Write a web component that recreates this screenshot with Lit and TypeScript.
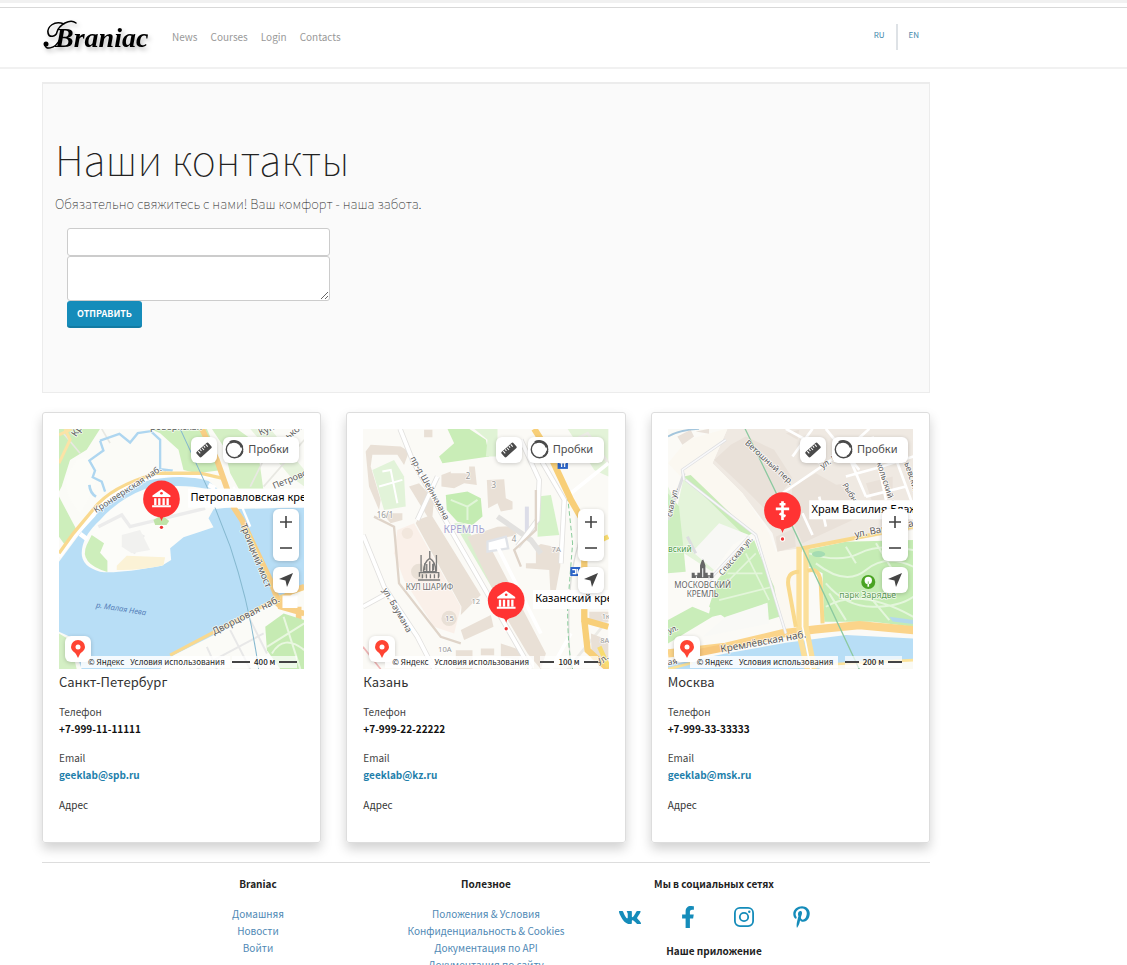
import { LitElement, html, svg, css } from "lit";
import { customElement, property } from "lit/decorators.js";

interface Office {
  id: string;
  city: string;
  phone: string;
  email: string;
  scale: string;
}

const offices: Office[] = [
  { id: "spb", city: "Санкт-Петербург", phone: "+7-999-11-11111", email: "geeklab@spb.ru", scale: "400 м" },
  { id: "kz", city: "Казань", phone: "+7-999-22-22222", email: "geeklab@kz.ru", scale: "100 м" },
  { id: "msk", city: "Москва", phone: "+7-999-33-33333", email: "geeklab@msk.ru", scale: "200 м" },
];

// Street or place name drawn on a map, turned around its start point.
const label = (x: number, y: number, angle: number, size: number, text: string, color = "#5b5b5b") => svg`
  <text x=${x} y=${y} font-size=${size} fill=${color} transform="rotate(${angle} ${x} ${y})"
    stroke="#fff" stroke-width="5" stroke-opacity=".75" paint-order="stroke" stroke-linejoin="round">${text}</text>`;

const museum = svg`<g fill="#fff"><path d="M-27 -10L0 -29 27 -10v4h-54z"/><path d="M-22 -2h7v20h-7zM-10 -2h7v20h-7zM3 -2h7v20h-7zM15 -2h7v20h-7zM-28 19h56v6h-56z"/></g><circle cy="-17" r="4" fill="#f33"/>`;
const cross = svg`<path d="M0 -28V28M-9 -19H9M-20 -5H20M-9 9L9 17" stroke="#fff" stroke-width="8" fill="none"/>`;

const marker = (x: number, y: number, sign: unknown, text: string) => svg`
  <rect x=${x + 80} y=${y - 31} width="500" height="57" fill="#fff"/>
  <text x=${x + 87} y=${y + 6} font-size="33" fill="#000">${text}</text>
  <g transform="translate(${x} ${y})">
    <path d="M-14 50Q-3 54 0 67Q3 54 14 50z" fill="#f33"/>
    <circle r="55" fill="#f33"/>${sign}
    <circle cy="85" r="8" fill="#fff"/><circle cy="85" r="5" fill="#e33"/>
  </g>`;

const spbMap = svg`
  <rect x="27" y="27" width="735" height="720" fill="#fbfbf7"/>
  <path d="M27 27H150L110 90 60 120 35 200 27 215zM27 230L80 330 45 375 27 350z" fill="#cdeebb"/>
  <path d="M300 27H470L490 75 515 150 440 160 400 150 385 90 330 40z" fill="#cdeebb"/>
  <path d="M485 27H560L620 70 640 215 570 215 540 160 520 80z" fill="#d4efc4"/>
  <path d="M600 27H660L762 150V200L720 170z" fill="#e6f3dc"/>
  <path d="M80 120Q130 100 140 150Q140 210 90 280Q40 230 50 170z" fill="#fcfcf8"/>
  <path d="M155 27L180 70M345 150V165M40 40L90 100M640 200L762 60M600 200L640 120" stroke="#e8e8e2" stroke-width="5" fill="none"/>
  <path d="M150 62L160 92 118 122 135 152 128 172 155 185 165 215M150 62L208 42 240 68 263 40 302 34 330 60 330 148 364 152 360 165" stroke="#aed6f0" stroke-width="7" fill="none"/>
  <path d="M118 195Q120 220 138 230" stroke="#aed6f0" stroke-width="8" fill="none"/>
  <path d="M27 425L120 300Q185 220 290 182Q400 160 475 183L500 205 545 268 762 262V500L680 530 560 610 370 705 330 747H95L60 650 27 635z" fill="#b8def6"/>
  <path d="M95 400Q95 350 150 300Q205 237 290 205Q400 190 470 208L542 262 490 268 475 295 490 322 450 335 400 352 360 385 363 420 335 437Q200 462 150 455Q95 440 95 400z" fill="#fcfcf9"/>
  <path d="M125 345L162 370 150 398 172 422V456Q85 430 110 375z" fill="#cdeebb"/>
  <path d="M200 437L230 407 345 412 340 436Q270 452 200 450z" fill="#fbf2d6"/>
  <path d="M145 320L215 285 240 320 465 265M280 345L250 400" stroke="#ececec" stroke-width="10" fill="none"/>
  <path d="M215 345L270 330 300 390 245 400 215 380z" fill="#f1f1ef"/>
  <path d="M310 300l25-15 22 18-8 12h-34z" fill="#bfe3a8"/>
  <path d="M90 342L112 358M475 195L495 205M27 410L70 350 130 285Q170 215 300 172L360 162 490 170" stroke="#fff" stroke-width="14" fill="none"/>
  <path d="M27 400L70 340 130 268Q180 200 320 160L450 160 515 175M360 705L560 600 690 530 762 505" stroke="#f9d98f" stroke-width="10" fill="none"/>
  <path d="M27 45L65 27M45 27L60 60 27 130" stroke="#fbe3a6" stroke-width="9" fill="none"/>
  <path d="M455 27L500 120 550 262 575 300 660 480 690 560 762 580M680 560L720 515 762 500M745 560V620" stroke="#f8cf86" stroke-width="17" fill="none"/>
  <path d="M550 200L600 320M700 530h38v30h-38z" stroke="#fff" stroke-width="7" fill="#fff"/>
  <path d="M645 620L700 580 762 600V747H690L650 690z" fill="#c6ebb3"/>
  <path d="M650 680L762 610M700 590L750 747M665 700Q700 640 762 690" stroke="#e9f7e0" stroke-width="6" fill="none"/>
  <path d="M470 680L500 747M540 630L600 747M600 600L650 700M440 747L640 640" stroke="#e8e8e8" stroke-width="6" fill="none"/>
  <path d="M390 27L470 200 540 380Q600 560 625 747" stroke="#85b8cf" stroke-width="3" fill="none"/>
  <path d="M27 640L60 660 80 747H27z" fill="#d4efc4"/>
  ${label(78, 52, -55, 28, "Кр")}${label(300, 32, 0, 28, "роверкская")}
  ${label(138, 280, -33, 26, "Кронверкская наб.")}
  ${label(630, 48, -25, 28, "Кун")}${label(715, 60, -40, 28, "ьков")}${label(672, 208, -23, 27, "Петровская")}
  ${label(570, 315, 68, 28, "Троицкий мост")}${label(492, 645, -27, 29, "Дворцовая наб.")}
  <text x="137" y="562" font-size="23" font-style="italic" fill="#5580b8" transform="rotate(9 137 562)">р. Малая Нева</text>
  ${marker(334, 237, museum, "Петропавловская крепость")}`;

const kzMap = svg`
  <rect x="27" y="27" width="735" height="720" fill="#fbfaf6"/>
  <path d="M280 27H345L395 60 405 110 265 130 255 110 300 70z" fill="#c9edb7"/>
  <path d="M360 27H430V110H395L400 60z" fill="#e0f3d5"/>
  <path d="M640 27H762V170L720 150z" fill="#e3f3d8"/>
  <path d="M275 225L340 215 380 235 385 290 355 315 310 305 278 270z" fill="#c4ecb2"/>
  <path d="M550 230L590 225 615 345 550 350z" fill="#d5f2c8"/>
  <path d="M55 150L120 120 150 170 155 260 90 270z" fill="#e2f3d9"/>
  <path d="M300 310L330 310 480 560 470 600z" fill="#d9f0ce"/>
  <path d="M660 60L700 40 762 130M640 747L760 600" stroke="#ecebe6" stroke-width="8" fill="none"/>
  <path d="M130 330L180 310 320 560 300 640 240 620 150 480 120 400z" fill="#faf0e9"/>
  <g fill="#e9e0d6">
    <path d="M35 95L50 75 140 80 165 95 150 135 130 105 55 105 50 140 80 240 75 270 45 200z"/>
    <path d="M165 200L195 190 240 240 235 290 380 525 320 585 322 560 185 310 190 300 220 290z"/>
    <path d="M262 165L290 155V160H345V140H362L368 195 330 190 300 205 262 200z"/>
    <path d="M398 180L450 178 455 235 475 245V268L440 275 430 250 402 265z"/>
    <path d="M340 350L430 320 480 318 487 345 400 365 575 700 560 747 520 700 455 590z"/>
    <path d="M545 380L560 372 620 385 618 440 605 510 588 510 585 450 515 445V430L545 430z"/>
    <path d="M320 630L410 585 418 620 330 660z"/>
    <path d="M305 690H355V747H305zM380 685H420V705H380zM440 670L500 690 495 720 440 710zM705 575h57v30h-57zM710 640l52 20v87l-50-30z"/>
    <circle cx="285" cy="595" r="23"/><circle cx="195" cy="455" r="24"/><circle cx="160" cy="340" r="17" fill="#f2e7dd"/>
    <path d="M85 280H145V300L110 310zM210 30h25v22h-25z"/>
  </g>
  <path d="M85 155L110 150 130 250M75 200L145 180" stroke="#fff" stroke-width="6" fill="none"/>
  <path d="M290 240L340 260 370 240M340 260V300" stroke="#e1f5d8" stroke-width="6" fill="none"/>
  <path d="M400 365L455 350 462 385 400 395z" fill="#fff" stroke="#e0e3e8" stroke-width="7"/>
  <path d="M512 260h12v85h-12z" fill="#dcdde8"/>
  <g fill="none" stroke="#e2e1df" stroke-width="16">
    <path d="M138 27L175 120 290 330 530 747"/>
    <path d="M27 345L90 500 190 650 240 747M27 560L100 520M190 300L250 170"/>
    <path d="M500 60L555 180 550 300 490 380M430 290L530 360 560 400M620 430L630 240 560 120"/>
  </g>
  <g fill="none" stroke="#fff" stroke-width="11">
    <path d="M138 27L175 120 290 330 530 747"/>
    <path d="M27 345L90 500 190 650 240 747M27 560L100 520M190 300L250 170"/>
    <path d="M500 60L555 180 550 300 490 380M620 430L630 240 560 120"/>
    <path d="M650 220L762 130M430 380L560 640M590 747L650 640"/>
  </g>
  <path d="M60 290L120 320 135 490 260 650 320 670M545 210V330L480 390 500 440" stroke="#dfd4c9" stroke-width="7" fill="none"/>
  <path d="M650 747Q630 520 670 380L690 290" stroke="#dededb" stroke-width="4" fill="none"/>
  <path d="M575 90L640 230 655 370 640 560Q640 690 655 747" stroke="#8acb9b" stroke-width="3" stroke-dasharray="14 8" fill="none"/>
  <path d="M540 27L580 90 650 240 690 310 690 500 690 600 762 620M690 600L700 690 762 747" stroke="#f8cf78" stroke-width="19" fill="none"/>
  <path d="M720 370L762 350M735 680L762 740" stroke="#f8dc70" stroke-width="14" fill="none"/>
  <path d="M27 680L80 747" stroke="#efb6b6" stroke-width="5"/>
  <g fill="#2b64c8"><rect x="610" y="122" width="31" height="25"/><rect x="648" y="441" width="30" height="27"/></g>
  <path d="M616 129h19M622 129v12M631 129v12M654 449h10v12h-9M669 447v14" stroke="#fff" stroke-width="4" fill="none"/>
  <g fill="none" stroke="#7a7a7a" stroke-width="4">
    <path d="M192 480h66M196 470v-12h58v12M201 455V405M212 450V430M247 455V405M238 450V430"/>
    <path d="M208 455Q210 425 227 415Q245 425 245 455zM227 415V393M205 475v-12M217 475v-12M229 475v-12M241 475v-12M253 475v-12M218 455V432M227 455V424M236 455V432"/>
  </g>
  ${label(168, 115, 61, 26, "пр-д Шейнкмана")}${label(85, 510, 60, 26, "ул. Баумана")}
  ${label(268, 340, 0, 31, "КРЕМЛЬ", "#a5a4d0")}${label(155, 509, 0, 24, "КУЛ ШАРИФ", "#707070")}
  ${label(68, 293, 0, 24, "16/1", "#999")}${label(335, 178, 0, 24, "2", "#999")}${label(412, 205, 0, 24, "3", "#999")}
  ${label(473, 367, 0, 24, "4", "#999")}${label(592, 397, 0, 23, "7А", "#999")}${label(352, 553, 0, 23, "12", "#999")}
  ${label(273, 602, 0, 23, "15", "#999")}${label(252, 696, 0, 23, "10А", "#999")}${label(738, 670, 0, 22, "8А", "#999")}${label(742, 597, 0, 22, "1к", "#999")}
  ${label(735, 738, -40, 27, "Ул.")}
  ${marker(456, 541, museum, "Казанский кремль")}`;

const mskMap = svg`
  <rect x="27" y="27" width="735" height="720" fill="#fbfaf6"/>
  <path d="M205 27H762V330L440 385 355 395 340 340 250 220 160 130z" fill="#efe9e2"/>
  <path d="M27 130L85 60 200 27H205L160 130 250 220 330 340 350 395 425 385 420 640 380 640 290 340 75 180z" fill="#fbf8f1"/>
  <g fill="#e9e1d9">
    <path d="M215 75L260 50 345 90 400 175 370 215 340 290 250 200 165 120z"/>
    <path d="M400 200L470 160 540 200 580 300 430 370 390 280z"/>
    <path d="M350 350L405 325 410 380 355 395zM500 200L560 190 600 260 540 280z"/>
    <path d="M380 40L420 30 415 60zM620 190L700 170 700 230 640 250zM55 50l40-20 10 20-35 25zM110 35l40-8v15z"/>
  </g>
  <g stroke="#fff" stroke-width="8" fill="none">
    <path d="M370 220L560 90 630 27M560 90L620 230M480 130L440 60 380 27M400 110L460 27M500 27L600 150M640 50L680 240M560 170L650 145 762 110M700 90L762 260M430 280L460 345M480 230L500 320M620 230L740 200"/>
  </g>
  <path d="M27 200L55 260 75 170 270 335 220 370 160 455 75 400 27 330z" fill="#e4f4da"/>
  <path d="M75 170L95 165 250 315 280 340 260 350z" fill="#c9ecb8"/>
  <path d="M100 395L180 310 270 345 220 375 165 450z" fill="#f8f8f5"/>
  <path d="M27 220L60 260 75 400 80 455 27 460z" fill="#cdeebf"/>
  <path d="M285 360L300 400 345 500 360 590 245 625 150 560 175 480 240 400z" fill="#c9edb9"/>
  <path d="M165 510L325 550 160 590 27 670V600L100 560 150 580z" fill="#c9edb9"/>
  <path d="M190 500L290 400M180 540L340 500M260 400L330 540M205 460L310 460" stroke="#e3f5da" stroke-width="5" fill="none"/>
  <path d="M200 590L325 548 330 610 130 650z" fill="#f9f9f6"/>
  <path d="M440 390L560 365 762 360V620L640 605 495 605 490 460 450 440z" fill="#c5ecb4"/>
  <g stroke="#e4f6dc" stroke-width="6" fill="none">
    <path d="M450 400Q540 430 600 400T762 390M470 430Q560 500 620 450T762 440M500 560Q600 500 762 590M500 490Q560 560 640 560T762 530M560 380L590 430M650 370L700 450M510 520L560 600M640 540L690 600"/>
  </g>
  <ellipse cx="478" cy="402" rx="20" ry="9" fill="#a5dcb2"/>
  <path d="M690 590L730 595 762 600V612L700 604z" fill="#b3d9ec"/>
  <path d="M27 735L200 700 380 668 560 645 762 655V720L600 747H27z" fill="#b8def6"/>
  <path d="M500 720L762 700V747H480z" fill="#fafaf4"/>
  <path d="M510 712Q640 690 762 698V720Q640 715 510 735z" fill="#b8def6"/>
  <path d="M27 700L200 680 370 640 470 628 600 615 762 630" stroke="#fbd48a" stroke-width="25" fill="none"/>
  <path d="M55 710L200 682" stroke="#f7c77c" stroke-width="22" fill="none"/>
  <path d="M420 380V640L445 747M440 385V620L465 747" stroke="#fbdf9a" stroke-width="17" fill="none"/>
  <path d="M430 395V620L455 747" stroke="#fff" stroke-width="5" fill="none"/>
  <path d="M420 455Q380 455 388 500L410 620M445 452Q485 440 485 500L490 610M430 385L762 320" stroke="#f9d98c" stroke-width="12" fill="none"/>
  <path d="M500 733L762 720M27 747L100 728" stroke="#fce39a" stroke-width="8"/>
  <path d="M75 180L70 150 200 60M75 160L27 300M80 180L290 345 380 640M150 480L270 350M110 400L85 350" stroke="#dddee0" stroke-width="9" fill="none"/>
  <path d="M75 180L70 150 200 60M80 180L290 345 380 640M150 480L270 350" stroke="#f8f8fa" stroke-width="5" fill="none"/>
  <path d="M27 50Q60 30 120 27" stroke="#a3c5dc" stroke-width="5" fill="none"/>
  <path d="M258 27L400 320 600 747" stroke="#8cc9a0" stroke-width="4" fill="none"/>
  <circle cx="627" cy="486" r="21" fill="#4aa322"/><circle cx="627" cy="481" r="11" fill="#fff"/><path d="M627 482v18" stroke="#fff" stroke-width="5"/><path d="M627 484v8" stroke="#4aa322" stroke-width="2"/>
  <path d="M98 474V458h9v8h8v-8h8v-22l8-22 8 22v22h7v8h8v-8h9v16z" fill="#666"/><path d="M131 412V420M131 445V472M112 474v-5M150 474v-5" stroke="#fff" stroke-width="3"/>
  ${label(256, 72, 42, 25, "Ветошный пер.")}${label(490, 147, -33, 25, "ул. Ильинка")}${label(548, 195, 58, 24, "Рыбный")}
  ${label(652, 130, 72, 25, "кольский пер.")}${label(735, 130, 72, 25, "ьевский")}${label(38, 292, -78, 24, "ская ул.")}
  ${label(190, 468, -50, 24, "Спасская ул.")}${label(588, 353, -11, 29, "ул. Варварка")}
  ${label(27, 396, 0, 25, "вский", "#4f9d4a")}${label(46, 504, 0, 24, "МОСКОВСКИЙ", "#666")}${label(83, 532, 0, 24, "КРЕМЛЬ", "#666")}
  ${label(540, 534, 0, 26, "парк Зарядье", "#5f9c55")}${label(186, 697, -10, 30, "Кремлёвская наб.")}
  ${label(30, 640, -20, 24, "ул.")}${label(27, 735, -8, 26, "ая")}
  ${marker(370, 272, cross, "Храм Василия Блаженного")}`;

const maps: Record<string, unknown> = { spb: spbMap, kz: kzMap, msk: mskMap };

@customElement("office-map")
export class OfficeMap extends LitElement {
  @property() name = "spb";
  @property() scale = "";

  static styles = css`
    :host { display: block; position: relative; overflow: hidden; height: 240px; font-family: "Noto Sans", sans-serif; }
    .canvas { display: block; width: 100%; height: 100%; }
    .control { position: absolute; display: flex; align-items: center; justify-content: center; padding: 0; border: 0; border-radius: 6px; background: #fff; color: #4d4d4d; box-shadow: 0 1px 4px rgba(0, 0, 0, .2); font: 11px/16px "Noto Sans", sans-serif; height: 26px; width: 26px; }
    .ruler { top: 8px; right: 87px; }
    .traffic { top: 8px; right: 5px; width: 76px; gap: 4px; justify-content: flex-start; padding: 0 0 2px 2px; }
    .zoom { position: absolute; top: 80px; right: 5px; width: 26px; border-radius: 6px; background: #fff; box-shadow: 0 1px 4px rgba(0, 0, 0, .2); }
    .step { display: flex; align-items: center; justify-content: center; width: 26px; height: 26px; padding: 0; border: 0; background: none; }
    .locate { top: 138px; right: 5px; }
    .brand { left: 6px; bottom: 7px; }
    .legal { position: absolute; left: 22px; right: 0; bottom: 1px; display: flex; align-items: center; justify-content: space-between; color: #222; font: 8px/12px "Noto Sans CJK SC", "Noto Sans", sans-serif; }
    .terms { display: flex; gap: 6px; padding: 0 5px 0 7px; background: rgba(255, 255, 255, .85); }
    .terms a { color: inherit; text-decoration: none; }
    .scale { display: flex; align-items: center; gap: 4px; margin-right: 7px; background: rgba(255, 255, 255, .7); font-weight: 500; }
    .rule { width: 18px; height: 2px; background: #444; }
    .short .rule { width: 14px; }
    .short { margin-right: 11px; }
  `;

  render() {
    return html`
      <svg class="canvas" viewBox="27 27 735 720" preserveAspectRatio="xMidYMid slice" role="img" aria-label="Карта">${maps[this.name]}</svg>
      <a class="control brand" href="#map" aria-label="Яндекс Карты">
        <svg width="14" height="18" viewBox="0 0 14 18"><path d="M7 0a7 7 0 0 1 7 7c0 4-4.400 5-5.500 8L7 18l-1.500-3C4.400 12 0 11 0 7a7 7 0 0 1 7-7z" fill="#f43"/><circle cx="7" cy="7" r="2.500" fill="#fff"/></svg>
      </a>
      <div class="legal">
        <span class="terms"><a href="#yandex">© Яндекс</a><a href="#terms">Условия использования</a></span>
        <span class="scale ${this.name === "spb" ? "" : "short"}"><span class="rule"></span>${this.scale}<span class="rule"></span></span>
      </div>
      <button class="control ruler" aria-label="Измерить">
        <svg width="16" height="16" viewBox="0 0 16 16"><g transform="rotate(-42 8 8)"><rect x="0" y="4.500" width="16" height="7" rx="1.500" fill="#4a4a4a"/><path d="M3 5v3M5.500 5v2M8 5v3M10.500 5v2M13 5v3" stroke="#fff"/></g></svg>
      </button>
      <button class="control traffic">
        <svg width="19" height="19" viewBox="0 0 19 19" fill="none" stroke="#4a4a4a"><circle cx="9.500" cy="9.500" r="8.200" stroke-width="1.400"/><path d="M5 2.500A8.200 8.200 0 0 1 17 7.500" stroke-width="2.600"/><path d="M17.500 11A8 8 0 0 1 13 16.600" stroke-width="2"/></svg>
        Пробки
      </button>
      <div class="zoom">
        <button class="step" aria-label="Приблизить"><svg width="12" height="12" viewBox="0 0 12 12"><path d="M6 0v12M0 6h12" stroke="#444" stroke-width="1.600"/></svg></button>
        <button class="step" aria-label="Отдалить"><svg width="12" height="12" viewBox="0 0 12 12"><path d="M0 6h12" stroke="#444" stroke-width="1.600"/></svg></button>
      </div>
      <button class="control locate" aria-label="Моё местоположение">
        <svg width="14" height="14" viewBox="0 0 14 14"><path d="M14 0L8 14 6.500 7.500 0 6z" fill="#444"/></svg>
      </button>`;
  }
}

@customElement("app-root")
export class AppRoot extends LitElement {
  static styles = css`
    :host { display: block; background: #fff; color: #222; font: 400 10px/17px "Noto Sans CJK SC", "Noto Sans", sans-serif; }
    * { box-sizing: border-box; }
    a { text-decoration: none; }
    .strip { height: 8px; border-top: 3px solid #f1f1f1; border-bottom: 1px solid #d8d8d8; }
    .navbar { display: flex; align-items: center; height: 61px; border-bottom: 2px solid #f1f1f1; padding: 0 42px 2px; }
    .bar { display: flex; align-items: center; width: 100%; max-width: 888px; }
    .logo { display: flex; align-items: center; width: 106px; height: 36px; margin-right: 24px; }
    .logo svg { overflow: visible; filter: drop-shadow(2px 3px 2px rgba(0, 0, 0, .25)); }
    .menu { display: flex; flex: 1; gap: 13px; }
    .menu a { color: #999; }
    .langs { display: flex; align-items: center; font-size: 8px; }
    .langs a { padding: 0 11px 4px; color: #3f87ab; line-height: 22px; }
    .langs a + a { border-left: 2px solid #dee2e6; }
    main, footer { max-width: 972px; padding: 0 42px; }
    .hero { margin-top: 13px; padding: 50px 12px 64px; border: 1px solid #ececec; border-top: 2px solid #ececec; background: #fafafa; }
    h1 { margin: 0; font-size: 41px; line-height: 48px; font-weight: 100; }
    .lead { margin: 12px 0 14px; font-size: 13px; line-height: 20px; font-weight: 100; color: #222; }
    form { display: flex; flex-direction: column; align-items: flex-start; padding: 0 12px; }
    .field { display: block; width: 263px; max-width: 100%; height: 28px; margin: 0; padding: 4px 8px; border: 1px solid #ccc; border-radius: 3px; background: #fff; font: inherit; outline: 0; }
    .message { height: 45px; resize: both; }
    .send { height: 27px; padding: 0 10px; border: 0; border-bottom: 2px solid #127ba3; border-radius: 3px; background: #158cba; color: #fff; font: 700 9px/22px "Noto Sans CJK SC", "Noto Sans", sans-serif; text-transform: uppercase; }
    .cards { display: grid; grid-template-columns: repeat(3, 1fr); gap: 25px; margin-top: 19px; }
    .card { padding: 16px; border: 1px solid #ddd; border-radius: 3px; box-shadow: 0 6px 12px rgba(0, 0, 0, .18); }
    .card h2 { margin: 3px 0 11px; font-size: 13px; line-height: 20px; font-weight: 400; color: #333; }
    dl { margin: 0 0 12px; color: #444; }
    dd { margin: 0; font-weight: 700; color: #111; }
    dd a { color: #1f7fab; }
    .address { margin: 13px 0; color: #333; }
    footer { margin-top: 19px; }
    .links { display: grid; grid-template-columns: repeat(3, 1fr); padding: 12px 102px 0; border-top: 1px solid #ddd; text-align: center; }
    h3 { margin: 0 0 13px; font-size: 10px; line-height: 17px; font-weight: 700; }
    .links ul { margin: 0; padding: 0; list-style: none; }
    .links li a { color: #5089b5; }
    .social { display: flex; justify-content: center; align-items: center; gap: 39px; height: 24px; margin: 0 0 13px; }
    .social a { display: flex; color: #158cba; }
  `;

  private renderCard(o: Office) {
    return html`
      <article class="card">
        <office-map name=${o.id} scale=${o.scale}></office-map>
        <h2>${o.city}</h2>
        <dl><dt>Телефон</dt><dd>${o.phone}</dd></dl>
        <dl><dt>Email</dt><dd><a href="mailto:${o.email}">${o.email}</a></dd></dl>
        <p class="address">Адрес</p>
      </article>`;
  }

  render() {
    return html`
      <div class="strip"></div>
      <header class="navbar">
        <div class="bar">
          <a class="logo" href="#home" aria-label="Braniac">
            <svg width="106" height="36" viewBox="0 0 106 36">
              <path d="M22 5C12 1 5 8 6 14c1 5 8 4 9-1C17 6 28-1 34 4M18 20c-5 11-16 11-15 5" fill="none" stroke="#000" stroke-width="1.500" stroke-linecap="round"/>
              <circle cx="4" cy="25" r="2.500"/>
              <text x="13" y="28" font-family="Liberation Serif, serif" font-size="28" font-weight="700" font-style="italic">Braniac</text>
            </svg>
          </a>
          <nav class="menu"><a href="#news">News</a><a href="#courses">Courses</a><a href="#login">Login</a><a href="#contacts">Contacts</a></nav>
          <div class="langs"><a href="#ru">RU</a><a href="#en">EN</a></div>
        </div>
      </header>
      <main>
        <section class="hero">
          <h1>Наши контакты</h1>
          <p class="lead">Обязательно свяжитесь с нами! Ваш комфорт - наша забота.</p>
          <form @submit=${(e: Event) => e.preventDefault()}>
            <input class="field" type="text" aria-label="Контакт">
            <textarea class="field message" aria-label="Сообщение"></textarea>
            <button class="send" type="submit">Отправить</button>
          </form>
        </section>
        <section class="cards">${offices.map((o) => this.renderCard(o))}</section>
      </main>
      <footer>
        <div class="links">
          <section>
            <h3>Braniac</h3>
            <ul><li><a href="#home">Домашняя</a></li><li><a href="#news">Новости</a></li><li><a href="#login">Войти</a></li></ul>
          </section>
          <section>
            <h3>Полезное</h3>
            <ul><li><a href="#rules">Положения &amp; Условия</a></li><li><a href="#privacy">Конфиденциальность &amp; Cookies</a></li><li><a href="#api">Документация по API</a></li><li><a href="#docs">Документация по сайту</a></li></ul>
          </section>
          <section>
            <h3>Мы в социальных сетях</h3>
            <div class="social">
              <a href="#vk" aria-label="VK"><svg width="24" height="21" viewBox="0 0 576 512" fill="currentColor"><path d="M545 117.700c3.700-12.500 0-21.700-17.800-21.700h-58.900c-15 0-21.900 7.900-25.600 16.700 0 0-30 73.100-72.400 120.500-13.700 13.700-20 18.100-27.500 18.100-3.700 0-9.400-4.400-9.400-16.900V117.700c0-15-4.200-21.700-16.600-21.700h-92.600c-9.400 0-15 7-15 13.500 0 14.200 21.200 17.500 23.400 57.500v86.800c0 19-3.400 22.500-10.900 22.500-20 0-68.600-73.400-97.400-157.400-5.800-16.300-11.500-22.900-26.600-22.900H38.800c-16.800 0-20.200 7.900-20.200 16.700 0 15.600 20 93.100 93.100 195.500C160.400 378.100 229 416 291.400 416c37.500 0 42.100-8.400 42.100-22.900 0-66.800-3.400-73.100 15.400-73.100 8.700 0 23.700 4.400 58.700 38.100 40 40 46.600 57.900 69 57.900h58.900c16.800 0 25.300-8.400 20.400-25-11.200-34.900-86.900-106.700-90.300-111.500-8.700-11.200-6.200-16.200 0-26.200.1-.1 72-101.300 79.400-135.600z"/></svg></a>
              <a href="#facebook" aria-label="Facebook"><svg width="14" height="22" viewBox="0 0 320 512" fill="currentColor"><path d="M279.100 288l14.200-92.700h-88.900v-60.100c0-25.400 12.400-50.100 52.200-50.100h40.400V6.300S260.400 0 225.400 0c-73.200 0-121.100 44.400-121.100 124.700v70.600H22.900V288h81.400v224h100.200V288z"/></svg></a>
              <a href="#instagram" aria-label="Instagram"><svg width="20" height="20" viewBox="0 0 20 20" fill="none" stroke="currentColor" stroke-width="1.800"><rect x=".9" y=".9" width="18.200" height="18.200" rx="5"/><circle cx="10" cy="10" r="4.200"/><circle cx="15.300" cy="4.700" r="1.200" fill="currentColor" stroke="none"/></svg></a>
              <a href="#pinterest" aria-label="Pinterest"><svg width="17" height="22" viewBox="0 0 384 512" fill="currentColor"><path d="M204 6.500C101.400 6.500 0 74.900 0 185.600 0 256 39.600 296 63.600 296c9.900 0 15.600-27.600 15.600-35.400 0-9.300-23.700-29.100-23.700-67.800 0-80.400 61.200-137.400 140.400-137.400 68.100 0 118.500 38.700 118.500 109.800 0 53.100-21.300 152.700-90.300 152.700-24.900 0-46.200-18-46.200-43.800 0-37.800 26.400-74.400 26.400-113.400 0-66.200-93.900-54.200-93.900 25.800 0 16.800 2.100 35.400 9.600 50.700-13.800 59.400-42 147.900-42 209.100 0 18.900 2.700 37.500 4.500 56.400 3.400 3.800 1.700 3.400 6.900 1.500 50.400-69 48.600-82.500 71.400-172.800 12.300 23.400 44.100 36 69.300 36 106.200 0 153.900-103.500 153.900-196.800C384 71.300 298.200 6.500 204 6.500z"/></svg></a>
            </div>
            <h3>Наше приложение</h3>
          </section>
        </div>
      </footer>`;
  }
}
